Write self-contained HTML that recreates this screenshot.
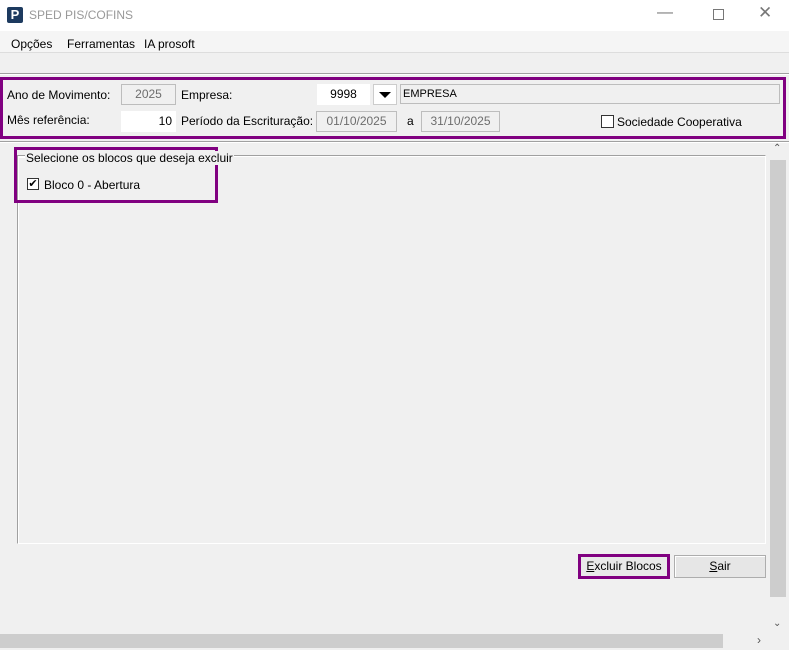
<!DOCTYPE html><html><head><style>
body{margin:0;width:789px;height:653px;position:relative;background:#f0f0f0;font-family:"Liberation Sans",sans-serif;font-size:12px;color:#000;overflow:hidden}
div{position:absolute;box-sizing:border-box}
.f{background:#f0f0f0;border:1px solid #bdbdbd;color:#6d6d6d;text-align:center;line-height:18px}
.w{background:#fff;border:1px solid #fff;color:#000}
.l{white-space:nowrap}
</style></head><body>
<div style="left:0;top:0;width:789px;height:31px;background:#fff"></div>
<div style="left:7px;top:7px;width:16px;height:16px;background:#1d3a5f;border-radius:2px;color:#fff;font-weight:bold;font-size:13px;line-height:16px;text-align:center">P</div>
<div class="l" style="left:29px;top:8px;color:#999;font-size:12px">SPED PIS/COFINS</div>
<div class="l" style="left:657px;top:4px;color:#777;font-size:16px">&#8212;</div>
<div style="left:713px;top:9px;width:11px;height:11px;border:1px solid #777"></div>
<div class="l" style="left:758px;top:3px;color:#777;font-size:17px">&#10005;</div>
<div style="left:0;top:31px;width:789px;height:22px;background:#f5f5f5;border-bottom:1px solid #ddd"></div>
<div class="l" style="left:11px;top:37px">Opções</div>
<div class="l" style="left:67px;top:37px">Ferramentas</div>
<div class="l" style="left:144px;top:37px">IA prosoft</div>
<div style="left:0;top:73px;width:789px;height:2px;border-top:1px solid #a0a0a0;border-bottom:1px solid #fff"></div>
<div style="left:0;top:77px;width:786px;height:62px;border:3px solid #800080"></div>
<div class="l" style="left:7px;top:88px">Ano de Movimento:</div>
<div class="f" style="left:121px;top:84px;width:55px;height:21px">2025</div>
<div class="l" style="left:181px;top:88px">Empresa:</div>
<div class="f w" style="left:317px;top:84px;width:53px;height:21px">9998</div>
<div class="w" style="left:373px;top:84px;width:24px;height:21px;border:1px solid #ccc"></div>
<div style="left:379px;top:92px;width:0;height:0;border-left:6px solid transparent;border-right:6px solid transparent;border-top:6px solid #000"></div>
<div class="f" style="left:400px;top:84px;width:380px;height:20px;text-align:left;color:#000;padding-left:2px;font-size:11px;line-height:18px">EMPRESA</div>
<div class="l" style="left:7px;top:113px">Mês referência:</div>
<div class="w" style="left:121px;top:111px;width:55px;height:21px;text-align:right;padding-right:3px;line-height:19px">10</div>
<div class="l" style="left:181px;top:114px">Período da Escrituração:</div>
<div class="f" style="left:316px;top:111px;width:81px;height:21px">01/10/2025</div>
<div class="l" style="left:407px;top:114px">a</div>
<div class="f" style="left:421px;top:111px;width:79px;height:21px">31/10/2025</div>
<div style="left:601px;top:115px;width:13px;height:13px;border:1px solid #333;background:#fff"></div>
<div class="l" style="left:617px;top:115px">Sociedade Cooperativa</div>
<div style="left:0;top:141px;width:789px;height:2px;border-top:1px solid #a0a0a0;border-bottom:1px solid #fff"></div>
<div style="left:17px;top:155px;width:749px;height:389px;border:1px solid #a0a0a0;border-right-color:#fff;border-bottom-color:#fff;box-shadow:inset 1px 1px 0 #fff"></div>
<div style="left:14px;top:147px;width:204px;height:56px;border:3px solid #800080"></div>
<div style="left:19px;top:157px;width:196px;height:1px;background:#fff"></div>
<div class="l" style="left:25px;top:151px;background:#f0f0f0;padding:0 1px">Selecione os blocos que deseja excluir</div>
<div style="left:27px;top:178px;width:12px;height:12px;border:1px solid #333;background:#fff;font-size:11px;line-height:10px;text-align:center">&#10004;</div>
<div class="l" style="left:44px;top:178px">Bloco 0 - Abertura</div>
<div style="left:578px;top:554px;width:92px;height:25px;border:3px solid #800080;background:#e9e9e9;text-align:center;line-height:19px"><u>E</u>xcluir Blocos</div>
<div style="left:674px;top:555px;width:92px;height:23px;border:1px solid #adadad;background:#e6e6e6;text-align:center;line-height:21px;box-shadow:inset 1px 1px 0 #fff"><u>S</u>air</div>
<div style="left:769px;top:143px;width:18px;height:489px;background:#f0f0f0"></div>
<div class="l" style="left:773px;top:143px;font-size:10px;color:#555">&#8963;</div>
<div style="left:770px;top:160px;width:16px;height:437px;background:#cdcdcd"></div>
<div class="l" style="left:773px;top:618px;font-size:10px;color:#555">&#8964;</div>
<div style="left:0;top:633px;width:769px;height:16px;background:#f0f0f0"></div>
<div style="left:0;top:634px;width:723px;height:14px;background:#cdcdcd"></div>
<div class="l" style="left:757px;top:633px;font-size:12px;color:#555">&#8250;</div>
<div style="left:0;top:650px;width:789px;height:3px;background:#fff"></div>
</body></html>
